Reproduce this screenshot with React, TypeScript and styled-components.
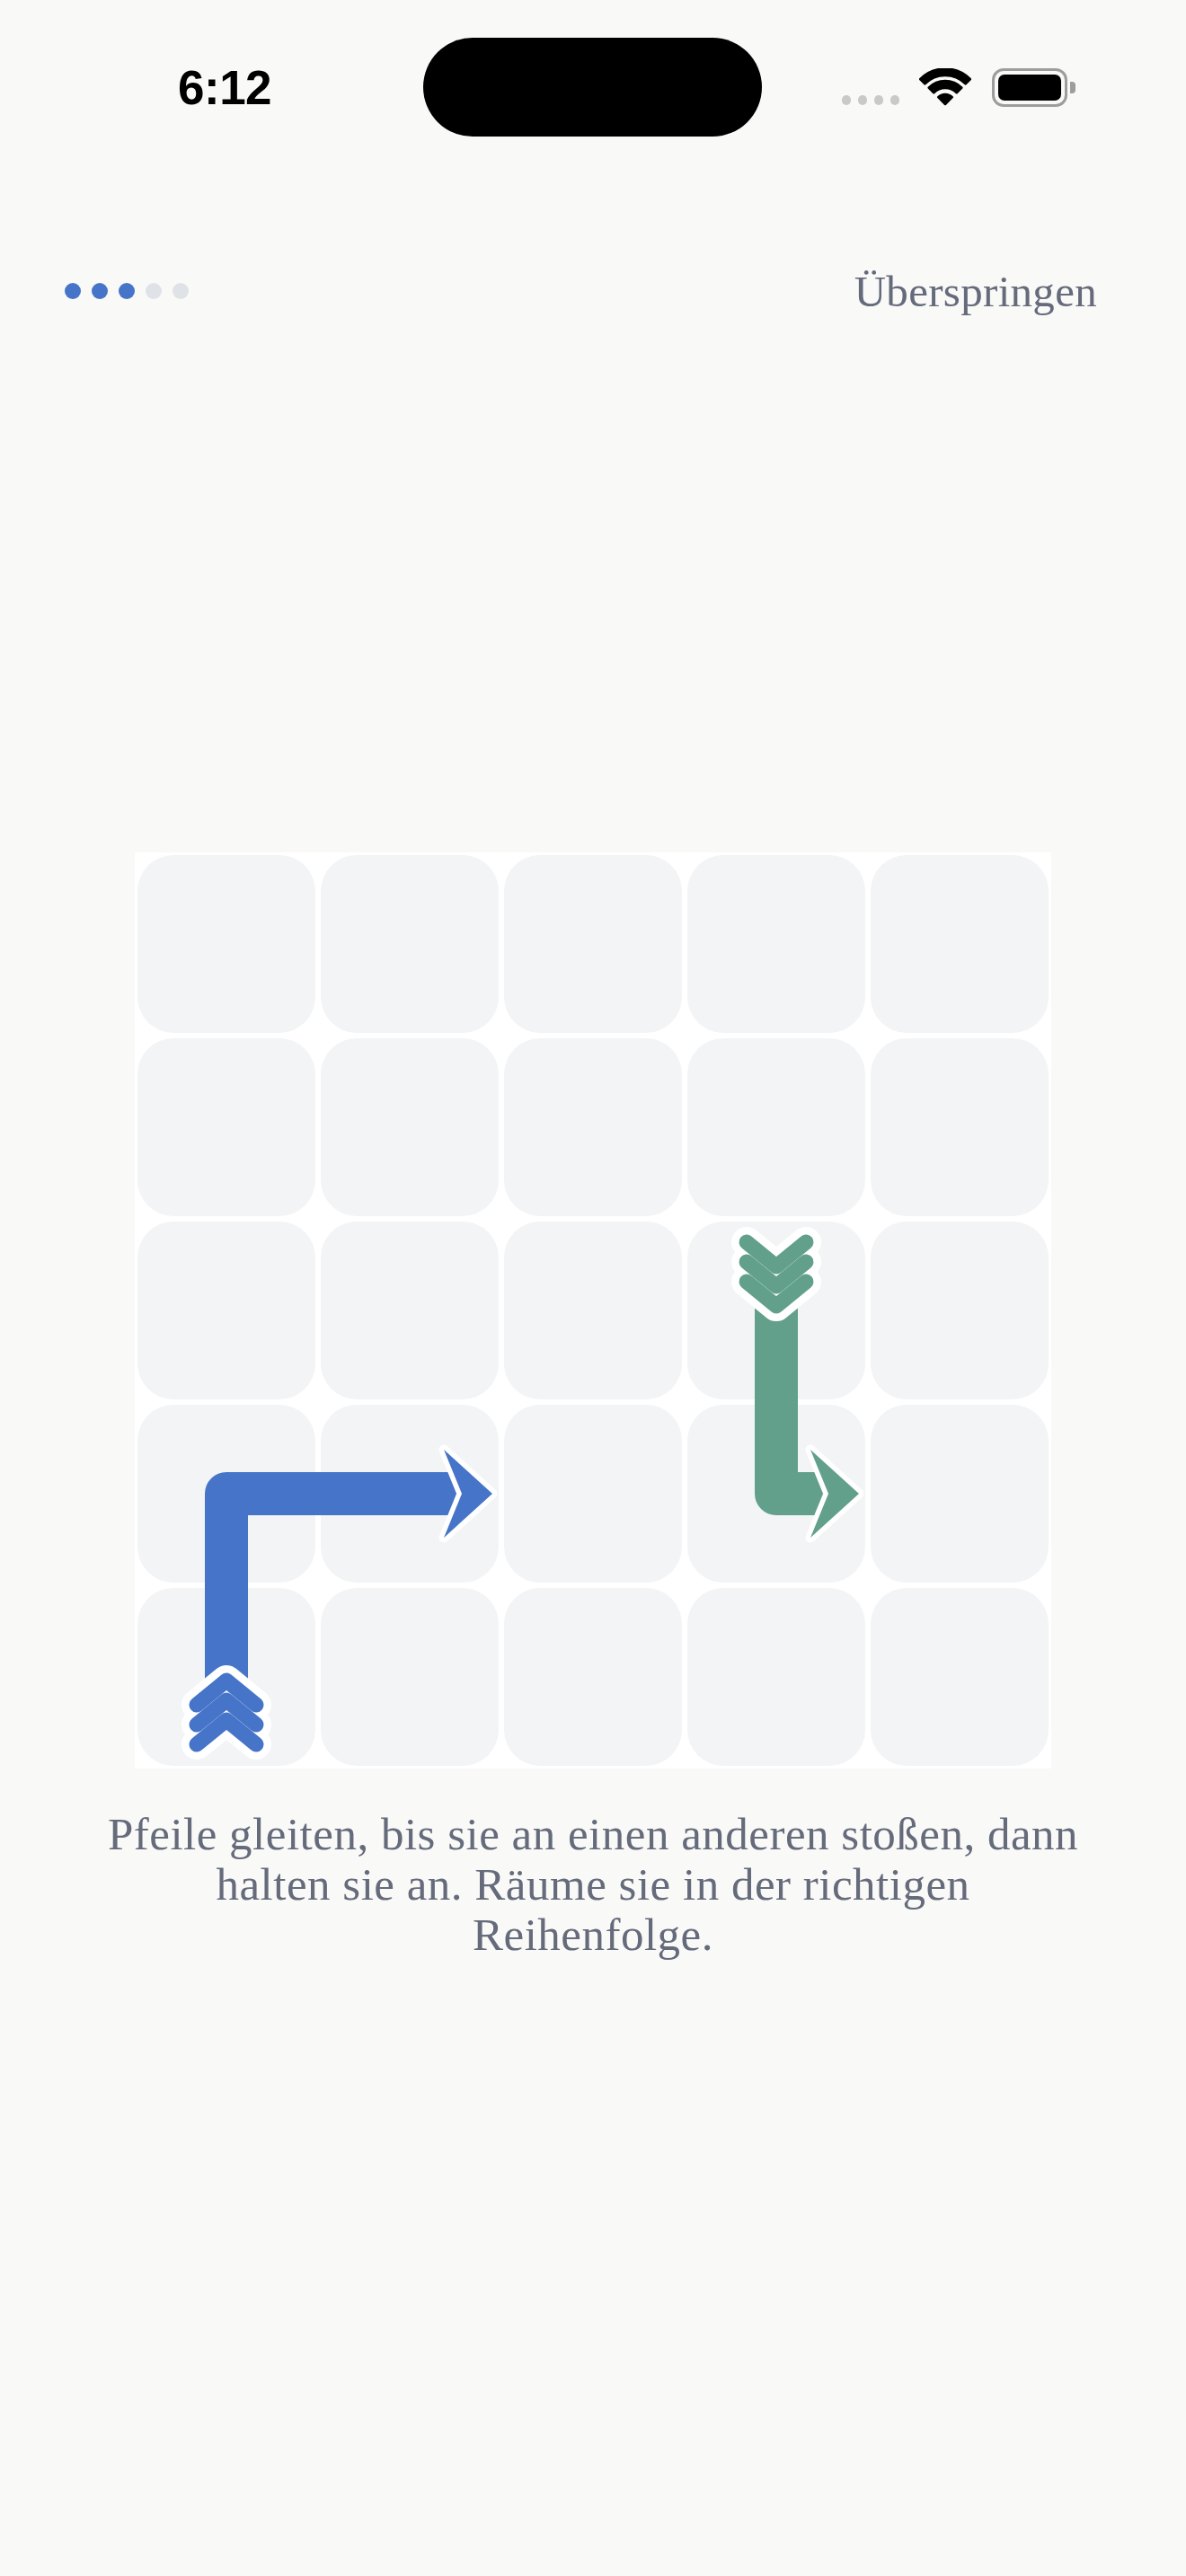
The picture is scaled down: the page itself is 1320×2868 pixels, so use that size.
import React from "react";
import styled, { createGlobalStyle } from "styled-components";

const BLUE = "#4674c8";
const GREEN = "#62a08c";

const GlobalStyle = createGlobalStyle`
  html, body { margin: 0; padding: 0; background: #f9f9f7; }
  #root { min-height: 2868px; }
`;

const Page = styled.div`
  width: 1320px;
  min-height: 2868px;
  background: #f9f9f7;
  display: flex;
  flex-direction: column;
  font-family: "Liberation Serif", "Times New Roman", serif;
`;

const StatusBar = styled.div`
  display: flex;
  align-items: center;
  padding: 42px 0 0 198px;
  height: 110px;
`;

const Clock = styled.div`
  font-family: "Liberation Sans", Arial, sans-serif;
  font-weight: 700;
  font-size: 53px;
  letter-spacing: -0.5px;
  color: #000;
  width: 105px;
  margin-right: 168px;
`;

const Island = styled.div`
  width: 377px;
  height: 110px;
  border-radius: 55px;
  background: #000;
  margin-right: 89px;
`;

const SignalDots = styled.div`
  display: flex;
  gap: 8px;
  align-self: flex-start;
  margin-top: 64px;
  margin-right: 22px;
`;

const SignalDot = styled.span`
  width: 10px;
  height: 11px;
  border-radius: 5px;
  background: #c9c9c9;
`;

const WifiIcon = styled.svg`
  width: 58px;
  height: 42px;
  margin-right: 23px;
  display: block;
`;

const Battery = styled.div`
  display: flex;
  align-items: center;
`;

const BatteryBody = styled.div`
  width: 84px;
  height: 43px;
  box-sizing: border-box;
  border: 3px solid #9d9d9d;
  border-radius: 13px;
  padding: 4px;
`;

const BatteryFill = styled.div`
  width: 100%;
  height: 100%;
  background: #000;
  border-radius: 7px;
`;

const BatteryNub = styled.div`
  width: 6px;
  height: 13px;
  margin-left: 3px;
  background: #9d9d9d;
  border-radius: 0 4px 4px 0;
`;

const Header = styled.div`
  display: flex;
  align-items: center;
  justify-content: space-between;
  height: 60px;
  margin-top: 142px;
  padding: 0 72px;
`;

const Dots = styled.div`
  display: flex;
  gap: 12px;
`;

const Dot = styled.span<{ $active: boolean }>`
  width: 18px;
  height: 18px;
  border-radius: 50%;
  background: ${(p) => (p.$active ? BLUE : "#dfe2e7")};
`;

const SkipButton = styled.button`
  border: none;
  background: transparent;
  font-family: "Liberation Serif", "Times New Roman", serif;
  font-size: 49px;
  letter-spacing: 0.3px;
  color: #656b7b;
  padding: 12px 27px;
  cursor: pointer;
`;

const Board = styled.div`
  position: relative;
  align-self: center;
  margin-top: 595px;
  display: grid;
  grid-template-columns: repeat(5, 198px);
  grid-auto-rows: 198px;
  gap: 6px;
  padding: 3px;
  background: #ffffff;
`;

const Cell = styled.div`
  background: #f3f4f6;
  border-radius: 40px;
`;

const ArrowLayer = styled.svg`
  position: absolute;
  inset: 0;
  width: 1020px;
  height: 1020px;
  pointer-events: none;
`;

const Caption = styled.p`
  margin: 45px auto 0;
  max-width: 1088px;
  text-align: center;
  font-size: 51px;
  letter-spacing: 0.5px;
  line-height: 56px;
  color: #656b7b;
`;

type ChevronProps = { x: number; apexes: number[]; up: boolean; color: string };

function Chevrons({ x, apexes, up, color }: ChevronProps) {
  const d = (a: number) => {
    const e = up ? a + 27 : a - 27;
    return `M${x - 33} ${e} L${x} ${a} L${x + 33} ${e}`;
  };
  return (
    <g fill="none" strokeLinecap="round" strokeLinejoin="round">
      {apexes.map((a) => (
        <path key={`w${a}`} d={d(a)} stroke="#ffffff" strokeWidth={34} />
      ))}
      {apexes.map((a) => (
        <path key={`c${a}`} d={d(a)} stroke={color} strokeWidth={17} />
      ))}
    </g>
  );
}

function Head({ tip, y, color }: { tip: number; y: number; color: string }) {
  const pts = `${tip},${y} ${tip - 54},${y - 49} ${tip - 34},${y} ${tip - 54},${y + 49}`;
  return (
    <polygon
      points={pts}
      fill={color}
      stroke="#ffffff"
      strokeWidth={11}
      strokeLinejoin="round"
      style={{ paintOrder: "stroke" }}
    />
  );
}

function wedge(cx: number, cy: number, r0: number, r1: number) {
  const a0 = (-135 * Math.PI) / 180;
  const a1 = (-45 * Math.PI) / 180;
  const p = (r: number, a: number) => `${(cx + r * Math.cos(a)).toFixed(2)} ${(cy + r * Math.sin(a)).toFixed(2)}`;
  if (r0 === 0) {
    return `M${cx} ${cy} L${p(r1, a0)} A${r1} ${r1} 0 0 1 ${p(r1, a1)} Z`;
  }
  return `M${p(r0, a0)} L${p(r1, a0)} A${r1} ${r1} 0 0 1 ${p(r1, a1)} L${p(r0, a1)} A${r0} ${r0} 0 0 0 ${p(r0, a0)} Z`;
}

export default function App() {
  const cells = Array.from({ length: 25 }, (_, i) => i);
  return (
    <>
      <GlobalStyle />
      <Page>
        <StatusBar>
          <Clock>6:12</Clock>
          <Island />
          <SignalDots>
            <SignalDot />
            <SignalDot />
            <SignalDot />
            <SignalDot />
          </SignalDots>
          <WifiIcon viewBox="0 0 58 42">
            <g fill="#000" stroke="#000" strokeWidth={2.5} strokeLinejoin="round">
              <path d={wedge(29, 40, 0, 11)} />
              <path d={wedge(29, 40, 18, 26)} />
              <path d={wedge(29, 40, 32, 39.5)} />
            </g>
          </WifiIcon>
          <Battery>
            <BatteryBody>
              <BatteryFill />
            </BatteryBody>
            <BatteryNub />
          </Battery>
        </StatusBar>

        <Header>
          <Dots>
            {[0, 1, 2, 3, 4].map((i) => (
              <Dot key={i} $active={i < 3} />
            ))}
          </Dots>
          <SkipButton>Überspringen</SkipButton>
        </Header>

        <Board>
          {cells.map((i) => (
            <Cell key={i} />
          ))}
          <ArrowLayer viewBox="0 0 1020 1020">
            <path d="M102 940 L102 714 L372 714" fill="none" stroke={BLUE} strokeWidth={48} strokeLinejoin="round" />
            <Head tip={398} y={714} color={BLUE} />
            <Chevrons x={102} apexes={[966, 944, 922]} up color={BLUE} />

            <path d="M714 455 L714 714 L780 714" fill="none" stroke={GREEN} strokeWidth={48} strokeLinejoin="round" />
            <Head tip={806} y={714} color={GREEN} />
            <Chevrons x={714} apexes={[461, 483, 505]} up={false} color={GREEN} />
          </ArrowLayer>
        </Board>

        <Caption>
          Pfeile gleiten, bis sie an einen anderen stoßen, dann halten sie an. Räume sie in der richtigen Reihenfolge.
        </Caption>
      </Page>
    </>
  );
}
